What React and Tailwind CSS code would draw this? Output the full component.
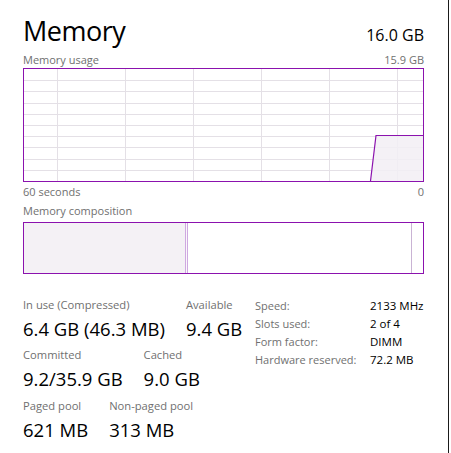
import React from "react";

const font = { fontFamily: '"Segoe UI", "Open Sans", sans-serif' };

const gridX = [33, 101, 169, 237, 305, 373];
const gridY = [1, 2, 3, 4, 5, 6, 7, 8, 9].map((i) => i * 11.2);

function UsageGraph() {
  return (
    <div className="h-[114px] border border-[#8b12ae] bg-white">
      <svg width="399" height="112" viewBox="0 0 399 112" className="block">
        {gridX.map((x) => (
          <line key={"x" + x} x1={x + 0.5} y1="0" x2={x + 0.5} y2="112" stroke="#e4e0e6" strokeWidth="1" />
        ))}
        {gridY.map((y) => (
          <line key={"y" + y} x1="0" y1={Math.round(y) + 0.5} x2="399" y2={Math.round(y) + 0.5} stroke="#e4e0e6" strokeWidth="1" />
        ))}
        <polygon points="346.5,112 352,66 399,66 399,112" fill="#f2eef4" fillOpacity="0.85" />
        <polyline points="346.5,112 352,66.5 399,66.5" fill="none" stroke="#8b12ae" strokeWidth="1.2" />
      </svg>
    </div>
  );
}

function Stat({ label, value }) {
  return (
    <div className="flex flex-col">
      <span className="text-[11.2px] leading-[16px] text-[#707070] whitespace-nowrap">{label}</span>
      <span className="mt-[3px] text-[18.5px] leading-[26px] text-black whitespace-nowrap">{value}</span>
    </div>
  );
}

const specs = [
  ["Speed:", "2133 MHz"],
  ["Slots used:", "2 of 4"],
  ["Form factor:", "DIMM"],
  ["Hardware reserved:", "72.2 MB"],
];

export default function App() {
  return (
    <div className="w-[451px] h-[453px] bg-white" style={font}>
      <div className="w-[449px] h-[453px] border-r border-[#1a1a1a] pl-[23px] pt-[13px]">
        <div className="w-[401px]">
          <div className="flex items-end justify-between h-[36px]">
            <span className="text-[27px] leading-[36px] tracking-[-0.5px] text-black">Memory</span>
            <span className="text-[16px] leading-[22px] mb-[3px] text-black">16.0 GB</span>
          </div>
          <div className="flex justify-between text-[11px] leading-[16px] text-[#707070] mt-[3px]">
            <span>Memory usage</span>
            <span>15.9 GB</span>
          </div>
          <UsageGraph />
          <div className="flex justify-between text-[11px] leading-[16px] text-[#707070] mt-[2px]">
            <span>60 seconds</span>
            <span>0</span>
          </div>
          <div className="text-[11px] leading-[16px] text-[#707070] mt-[3px]">Memory composition</div>
          <div className="flex h-[52px] border border-[#8b12ae] mt-[3px]">
            <div className="w-[161px] bg-[#f4f1f5]" />
            <div className="w-[3px] border-x border-[#cfa9e0] bg-[#faf8fb]" />
            <div className="flex-1 bg-white" />
            <div className="w-px bg-[#c9b3d4]" />
            <div className="w-[11px] bg-white" />
          </div>

          <div className="flex mt-[23px]">
            <div className="w-[232px] flex flex-col gap-[5px]">
              <div className="flex gap-[21px]">
                <Stat label="In use (Compressed)" value="6.4 GB (46.3 MB)" />
                <Stat label="Available" value="9.4 GB" />
              </div>
              <div className="flex gap-[21px]">
                <Stat label="Committed" value="9.2/35.9 GB" />
                <Stat label="Cached" value="9.0 GB" />
              </div>
              <div className="flex gap-[21px] mt-[1px]">
                <Stat label="Paged pool" value="621 MB" />
                <Stat label="Non-paged pool" value="313 MB" />
              </div>
            </div>
            <div className="flex flex-col">
              {specs.map(([k, v]) => (
                <div key={k} className="flex h-[18px] items-center">
                  <span className="w-[115px] text-[11px] text-[#707070] whitespace-nowrap">{k}</span>
                  <span className="text-[11.5px] text-black whitespace-nowrap">{v}</span>
                </div>
              ))}
            </div>
          </div>
        </div>
      </div>
    </div>
  );
}
